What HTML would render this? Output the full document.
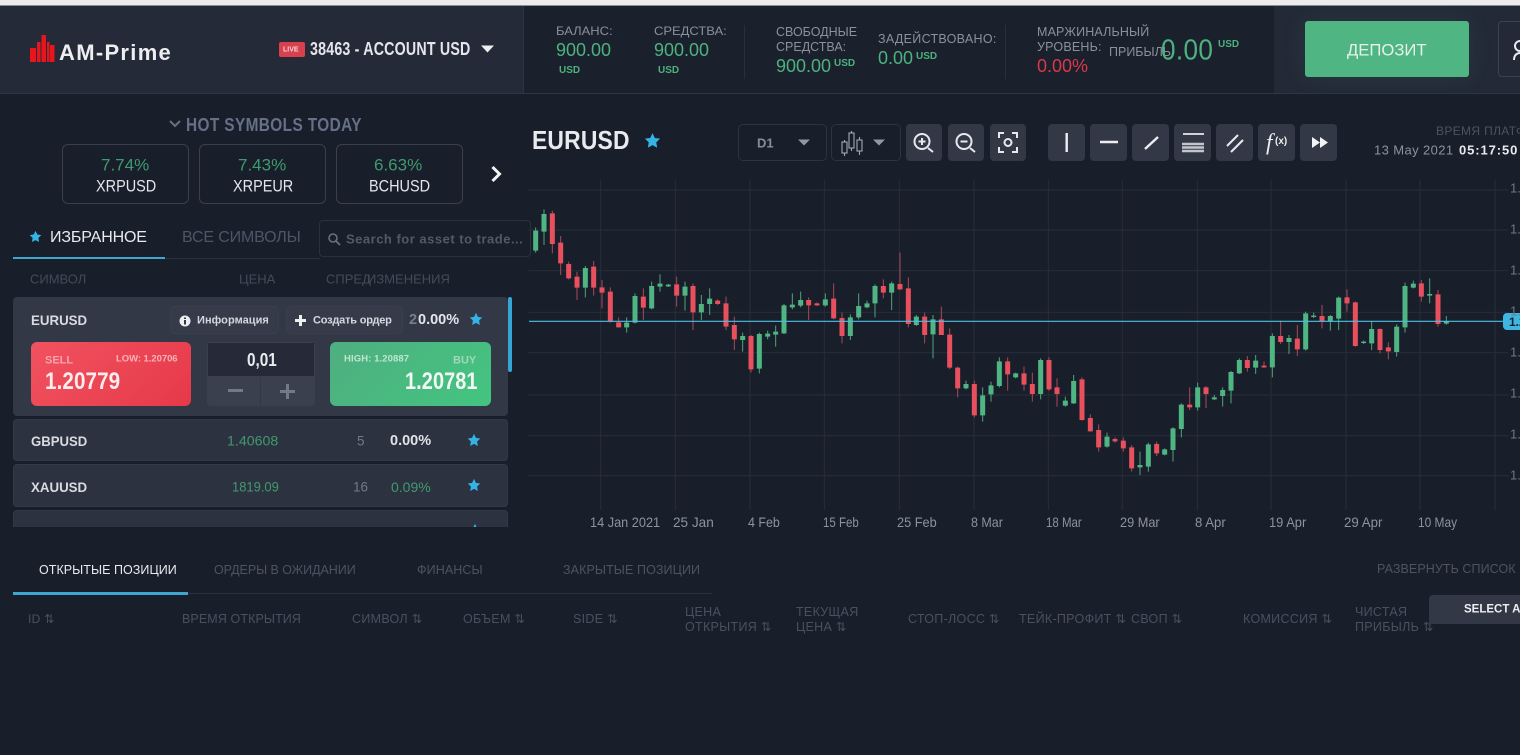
<!DOCTYPE html>
<html lang="ru"><head><meta charset="utf-8"><title>AM-Prime</title>
<style>
*{box-sizing:border-box}
html,body{margin:0;padding:0;width:1520px;height:755px;overflow:hidden;background:#191e2b;font-family:"Liberation Sans",sans-serif}
#p{position:relative;width:1520px;height:755px;overflow:hidden;background:#191e2b;filter:blur(.35px)}
.b{position:absolute}
.t{position:absolute;white-space:nowrap;transform:translateY(-50%) scaleX(var(--x,1));transform-origin:left center;line-height:1;font-family:"Liberation Sans",sans-serif}
.w{font-family:"Liberation Sans",sans-serif}
.g{color:#49a877}
.d{color:#4a5060}
.bd{letter-spacing:.3px}
.m{color:#8b909d}
.tb{position:absolute;top:124px;height:37px;background:#333846;border-radius:4px}
.tb svg{position:absolute;left:0;top:0}
.hb{position:absolute;top:144px;height:60px;width:127px;border:1px solid #3a3f4b;border-radius:6px}
.row{position:absolute;left:13px;width:495px;background:#2d3240;border-radius:4px;border:1px solid #343947}
</style></head><body><div id="p">
<svg width="0" height="0" style="position:absolute"><defs><symbol id="s" viewBox="0 0 24 24"><path d="M12 1.500l3.300 6.900 7.400 1-5.400 5.200 1.300 7.600L12 18.600l-6.600 3.600 1.300-7.600L1.300 9.400l7.400-1z" fill="#34b3e4"/></symbol></defs></svg>

<div class="b" style="left:0;top:0;width:1520px;height:5px;background:#ececec"></div>
<div class="b" style="left:0;top:5px;width:1520px;height:1px;background:#8b8d92"></div>
<div class="b" style="left:0;top:6px;width:523px;height:87px;background:#242a38"></div>
<div class="b" style="left:523px;top:6px;width:751px;height:87px;background:#1b202d;border-left:1px solid #2c3240"></div>
<div class="b" style="left:1274px;top:6px;width:246px;height:87px;background:#232937"></div>
<div class="b" style="left:0;top:93px;width:1520px;height:1px;background:#2f3542"></div>

<!-- logo -->
<svg class="b" style="left:30px;top:34px" width="25" height="28" viewBox="0 0 25 28"><path d="M0 14h6v14H0zM7 8h3.500v20H7zM11.500 1h4.500v27h-4.500zM17 8h2.500v20H17zM20 11h4.500v17H20z" fill="#e8161c"/></svg>
<span class="t w" style="left:59px;top:53px;font-size:22px;font-weight:700;letter-spacing:1.3px;color:#eceef0">AM-Prime</span>

<div class="b" style="left:279px;top:42px;width:26px;height:15px;background:#d9404e;border-radius:2px"></div>
<span class="t w" style="left:283px;top:50px;font-size:7px;font-weight:700;color:#f4d5d8">LIVE</span>
<span class="t" style="left:310px;top:49px;font-size:18px;font-weight:700;color:#e4e6ea;letter-spacing:.25px;--x:.79">38463 - ACCOUNT USD</span>
<svg class="b" style="left:481px;top:45px" width="13" height="8"><path d="M0 .5h13L6.500 7.500z" fill="#eceef0"/></svg>

<!-- stats -->
<span class="t m" style="left:556px;top:31px;font-size:12px;--x:1.08">БАЛАНС:</span>
<span class="t g" style="left:556px;top:50px;font-size:18px;color:#4cb27e">900.00</span>
<span class="t g" style="left:559px;top:71px;font-size:10px;font-weight:700;color:#4cb27e">USD</span>
<span class="t m" style="left:654px;top:31px;font-size:12px;--x:1.08">СРЕДСТВА:</span>
<span class="t g" style="left:654px;top:50px;font-size:18px;color:#4cb27e">900.00</span>
<span class="t g" style="left:658px;top:71px;font-size:10px;font-weight:700;color:#4cb27e">USD</span>
<div class="b" style="left:744px;top:25px;width:1px;height:54px;background:#2a2f3c"></div>
<span class="t m" style="left:776px;top:32px;font-size:12.500px">СВОБОДНЫЕ</span>
<span class="t m" style="left:776px;top:47px;font-size:12.500px">СРЕДСТВА:</span>
<span class="t g" style="left:776px;top:66px;font-size:18px;color:#4cb27e">900.00</span>
<span class="t g" style="left:834px;top:64px;font-size:10px;font-weight:700;color:#4cb27e">USD</span>
<span class="t m" style="left:878px;top:39px;font-size:12.500px;letter-spacing:.3px">ЗАДЕЙСТВОВАНО:</span>
<span class="t g" style="left:878px;top:58px;font-size:18px;color:#4cb27e">0.00</span>
<span class="t g" style="left:916px;top:57px;font-size:10px;font-weight:700;color:#4cb27e">USD</span>
<div class="b" style="left:1005px;top:25px;width:1px;height:54px;background:#2a2f3c"></div>
<span class="t m" style="left:1037px;top:32px;font-size:12.500px;letter-spacing:.15px">МАРЖИНАЛЬНЫЙ</span>
<span class="t m" style="left:1037px;top:47px;font-size:12.500px;letter-spacing:.2px">УРОВЕНЬ:</span>
<span class="t" style="left:1037px;top:66px;font-size:18px;color:#d8394a">0.00%</span>
<span class="t m" style="left:1109px;top:52px;font-size:12.500px">ПРИБЫЛЬ</span>
<span class="t g" style="left:1161px;top:51px;font-size:29px;color:#4cb27e;letter-spacing:.4px;--x:.9">0.00</span>
<span class="t g" style="left:1218px;top:45px;font-size:10px;font-weight:700;color:#4cb27e">USD</span>

<div class="b" style="left:1305px;top:21px;width:164px;height:56px;background:#4fb583;border-radius:3px;box-shadow:0 0 24px rgba(79,181,131,.12)"></div>
<span class="t" style="left:1347px;top:50px;font-size:17px;color:#e6f3ec;--x:.98">ДЕПОЗИТ</span>
<div class="b" style="left:1498px;top:21px;width:40px;height:56px;border:1px solid #3c4250;border-radius:4px"></div>
<svg class="b" style="left:1512px;top:38px" width="8" height="24"><circle cx="8" cy="8" r="5" fill="none" stroke="#e8eaee" stroke-width="2"/><path d="M2 22c0-5 3-7 6-7" fill="none" stroke="#e8eaee" stroke-width="2"/></svg>

<!-- hot -->
<svg class="b" style="left:169px;top:120px" width="12" height="8"><path d="M1 1l5 5 5-5" fill="none" stroke="#687084" stroke-width="2"/></svg>
<span class="t" style="left:186px;top:125px;font-size:18px;font-weight:700;color:#667086;letter-spacing:.45px;--x:.855">HOT SYMBOLS TODAY</span>
<div class="hb" style="left:62px"></div><div class="hb" style="left:199px"></div><div class="hb" style="left:336px"></div>
<span class="t g" style="left:101px;top:165px;font-size:17px;color:#3f9a6e">7.74%</span>
<span class="t" style="left:96px;top:186px;font-size:17px;color:#e4e6ea;--x:.85">XRPUSD</span>
<span class="t g" style="left:238px;top:165px;font-size:17px;color:#3f9a6e">7.43%</span>
<span class="t" style="left:233px;top:186px;font-size:17px;color:#e4e6ea;--x:.85">XRPEUR</span>
<span class="t g" style="left:374px;top:165px;font-size:17px;color:#3f9a6e">6.63%</span>
<span class="t" style="left:369px;top:186px;font-size:17px;color:#e4e6ea;--x:.85">BCHUSD</span>
<svg class="b" style="left:490px;top:165px" width="13" height="18"><path d="M2.500 2l7 7-7 7" fill="none" stroke="#f2f3f5" stroke-width="3"/></svg>

<!-- tabs -->
<svg class="b" style="left:29px;top:230px" width="13" height="13"><use href="#s"/></svg>
<span class="t w" style="left:50px;top:238px;font-size:16px;color:#e8eaee;letter-spacing:-.15px">ИЗБРАННОЕ</span>
<span class="t w" style="left:182px;top:238px;font-size:16px;color:#4e5566;letter-spacing:-.15px">ВСЕ СИМВОЛЫ</span>
<div class="b" style="left:13px;top:258px;width:307px;height:1px;background:#2b303d"></div>
<div class="b" style="left:13px;top:257px;width:152px;height:2px;background:#3fa7cf"></div>
<div class="b" style="left:319px;top:220px;width:212px;height:37px;border:1px solid #2c313e;border-radius:4px"></div>
<svg class="b" style="left:327px;top:232px" width="14" height="14"><circle cx="6" cy="6" r="4" fill="none" stroke="#6a7080" stroke-width="1.600"/><path d="M9 9l4 4" stroke="#6a7080" stroke-width="1.800"/></svg>
<span class="t w" style="left:346px;top:239px;font-size:13px;font-weight:700;color:#535969;letter-spacing:.5px">Search for asset to trade...</span>

<span class="t w d" style="left:30px;top:279px;font-size:13px;color:#444a59">СИМВОЛ</span>
<span class="t w d" style="left:239px;top:279px;font-size:13px;color:#444a59">ЦЕНА</span>
<span class="t w d" style="left:326px;top:279px;font-size:13px;color:#444a59">СПРЕД</span>
<span class="t w d" style="left:367px;top:279px;font-size:13px;color:#444a59">ИЗМЕНЕНИЯ</span>

<!-- active row -->
<div class="row" style="top:297px;height:119px;background:#333846;border:0"></div>
<div class="b" style="left:508px;top:297px;width:4px;height:75px;background:#35a6d4;border-radius:2px"></div>
<span class="t w" style="left:31px;top:320px;font-size:14px;font-weight:700;color:#d9dbe0;--x:.95">EURUSD</span>
<div class="b" style="left:170px;top:306px;width:109px;height:28px;background:#363b49;border:1px solid #3a3f4d;border-radius:4px"></div>
<div class="b" style="left:286px;top:306px;width:117px;height:28px;background:#363b49;border:1px solid #3a3f4d;border-radius:4px"></div>
<svg class="b" style="left:179px;top:315px" width="12" height="12"><circle cx="6" cy="6" r="5.500" fill="#eceef0"/><path d="M5 5h2v4.500H5zM5 2.500h2v1.500H5z" fill="#333846"/></svg>
<span class="t w" style="left:197px;top:321px;font-size:11px;color:#d5d8de;font-weight:700;letter-spacing:.05px">Информация</span>
<svg class="b" style="left:295px;top:315px" width="11" height="11"><path d="M4 0h3v4h4v3H7v4H4V7H0V4h4z" fill="#eceef0"/></svg>
<span class="t w" style="left:313px;top:321px;font-size:11px;color:#d5d8de;font-weight:700;letter-spacing:-.2px">Создать ордер</span>
<span class="t w" style="left:409px;top:320px;font-size:14.500px;font-weight:700;color:#7a7f8c">2</span>
<span class="t w" style="left:418px;top:320px;font-size:14.500px;font-weight:700;color:#e4e6ea">0.00%</span>
<svg class="b" style="left:469px;top:312px" width="14" height="14"><use href="#s"/></svg>

<div class="b" style="left:31px;top:342px;width:160px;height:64px;border-radius:6px;background:linear-gradient(135deg,#f1525f,#e6394a)"></div>
<span class="t w" style="left:45px;top:361px;font-size:11px;font-weight:700;color:#f4a4ab">SELL</span>
<span class="t w" style="left:116px;top:359px;font-size:9.500px;font-weight:700;color:#f4b3b8;letter-spacing:-.05px">LOW: 1.20706</span>
<span class="t" style="left:45px;top:382px;font-size:24px;font-weight:700;color:#fbeced;letter-spacing:.1px;--x:.86">1.20779</span>
<div class="b" style="left:207px;top:342px;width:108px;height:64px;background:#3b404e;border-radius:4px"></div>
<div class="b" style="left:208px;top:343px;width:106px;height:33px;background:#262a38"></div>
<div class="b" style="left:260px;top:377px;width:1px;height:28px;background:#333846"></div>
<span class="t" style="left:247px;top:360px;font-size:18px;font-weight:700;color:#e8eaee;--x:.85">0,01</span>
<div class="b" style="left:228px;top:389px;width:15px;height:3px;background:#747986"></div>
<svg class="b" style="left:280px;top:384px" width="15" height="15"><path d="M6 0h3v6h6v3H9v6H6V9H0V6h6z" fill="#747986"/></svg>
<div class="b" style="left:330px;top:342px;width:161px;height:64px;border-radius:6px;background:linear-gradient(135deg,#4fae80,#43c580)"></div>
<span class="t w" style="left:344px;top:359px;font-size:9.500px;font-weight:700;color:#bfe6d0;letter-spacing:.1px">HIGH: 1.20887</span>
<span class="t w" style="left:453px;top:361px;font-size:11px;font-weight:700;color:#9fd8bb">BUY</span>
<span class="t" style="left:405px;top:382px;font-size:24px;font-weight:700;color:#f2f9f5;letter-spacing:.1px;--x:.83">1.20781</span>

<!-- rows -->
<div class="row" style="top:419px;height:42px"></div>
<span class="t w" style="left:31px;top:441px;font-size:14px;font-weight:700;color:#d9dbe0;--x:.94">GBPUSD</span>
<span class="t w" style="left:227px;top:441px;font-size:13.500px;color:#3f9a6e;--x:1.05">1.40608</span>
<span class="t w" style="left:357px;top:441px;font-size:13.500px;color:#747986">5</span>
<span class="t w" style="left:390px;top:441px;font-size:14.500px;font-weight:700;color:#e0e2e7">0.00%</span>
<svg class="b" style="left:467px;top:433px" width="14" height="14"><use href="#s"/></svg>
<div class="row" style="top:464px;height:43px"></div>
<span class="t w" style="left:31px;top:487px;font-size:14px;font-weight:700;color:#d9dbe0;--x:.95">XAUUSD</span>
<span class="t w" style="left:232px;top:487px;font-size:13.500px;color:#3f9a6e;--x:.96">1819.09</span>
<span class="t w" style="left:353px;top:487px;font-size:13.500px;color:#747986">16</span>
<span class="t w" style="left:391px;top:487px;font-size:14px;color:#3f9a6e">0.09%</span>
<svg class="b" style="left:467px;top:478px" width="14" height="14"><use href="#s"/></svg>
<div class="row" style="top:510px;height:40px"></div>
<svg class="b" style="left:468px;top:523px" width="14" height="14"><use href="#s"/></svg>
<div class="b" style="left:0;top:527px;width:529px;height:28px;background:#191e2b"></div>

<!-- chart header -->
<span class="t" style="left:532px;top:140px;font-size:26px;font-weight:700;color:#e8eaee;letter-spacing:.2px;--x:.88">EURUSD</span>
<svg class="b" style="left:644px;top:132px" width="17" height="17"><use href="#s"/></svg>
<div class="b" style="left:738px;top:124px;width:89px;height:37px;border:1px solid #2e3340;border-radius:5px"></div>
<span class="t w" style="left:757px;top:143px;font-size:13px;font-weight:700;color:#868c9c">D1</span>
<svg class="b" style="left:798px;top:139px" width="13" height="8"><path d="M0 .5h12L6 6.500z" fill="#9297a5"/></svg>
<div class="b" style="left:831px;top:124px;width:70px;height:37px;border:1px solid #2e3340;border-radius:5px"></div>
<svg class="b" style="left:840px;top:131px" width="24" height="26" fill="none" stroke="#a3a8b5" stroke-width="1.100"><path d="M4.500 9v16M11.500 0v20M19.500 6v18"/><rect x="2" y="11" width="5" height="11" fill="#191e2b"/><rect x="9" y="2" width="5" height="15" fill="#191e2b"/><rect x="17" y="9" width="5" height="11" fill="#191e2b"/></svg>
<svg class="b" style="left:873px;top:139px" width="13" height="8"><path d="M0 .5h12L6 6.500z" fill="#9297a5"/></svg>

<div class="tb" style="left:906px;width:36px"><svg width="36" height="37" fill="none" stroke="#e6e8ec" stroke-width="2"><circle cx="16" cy="17.500" r="7.500"/><path d="M12.500 17.500h7M16 14v7M22 24l5 4"/></svg></div>
<div class="tb" style="left:948px;width:36px"><svg width="36" height="37" fill="none" stroke="#e6e8ec" stroke-width="2"><circle cx="16" cy="17.500" r="7.500"/><path d="M12.500 17.500h7M22 24l5 4"/></svg></div>
<div class="tb" style="left:990px;width:36px"><svg width="36" height="37" fill="none" stroke="#e6e8ec" stroke-width="2"><path d="M9 14v-5h5M22 9h5v5M27 23v5h-5M14 28H9v-5"/><circle cx="18" cy="18.500" r="3.500"/></svg></div>
<div class="tb" style="left:1048px;width:37px"><svg width="37" height="37"><path d="M18.700 9v19" stroke="#eceef0" stroke-width="2.400"/></svg></div>
<div class="tb" style="left:1090px;width:37px"><svg width="37" height="37"><path d="M10 18h18" stroke="#eceef0" stroke-width="2.400"/></svg></div>
<div class="tb" style="left:1132px;width:37px"><svg width="37" height="37"><path d="M13 25L26 13" stroke="#eceef0" stroke-width="2.400"/></svg></div>
<div class="tb" style="left:1174px;width:37px"><svg width="37" height="37" fill="none" stroke="#e6e8ec"><path d="M9 10h21" stroke-width="1.800"/><path d="M8 20h22M8 23.500h22M8 27h22" stroke-width="2.400" opacity=".8"/></svg></div>
<div class="tb" style="left:1216px;width:37px"><svg width="37" height="37" fill="none" stroke="#e6e8ec" stroke-width="2.100"><path d="M11 22l11-11M15 28l12-12"/></svg></div>
<div class="tb" style="left:1258px;width:37px"><span class="t" style="left:8px;top:18px;font-family:'Liberation Serif',serif;font-style:italic;font-size:23px;color:#eceef0">f</span><span class="t w" style="left:17px;top:18px;font-size:10px;font-weight:700;color:#eceef0">(x)</span></div>
<div class="tb" style="left:1300px;width:37px"><svg width="37" height="37"><path d="M12 13l8 5.500-8 5.500zM20 13l8 5.500-8 5.500z" fill="#f2f3f5"/></svg></div>

<span class="t" style="left:1436px;top:131px;font-size:12px;color:#4d5362;letter-spacing:.35px">ВРЕМЯ ПЛАТФОРМЫ</span>
<span class="t w" style="left:1374px;top:150px;font-size:13px;color:#8d92a0;letter-spacing:.4px">13 May 2021</span>
<span class="t w" style="left:1459px;top:150px;font-size:13px;font-weight:700;color:#e8eaee;letter-spacing:.9px">05:17:50</span>

<!-- chart -->
<svg class="b" style="left:525px;top:180px" width="1000" height="360" viewBox="0 0 3000 1080" fill="none">
<path d="M10 30H2950M10 150H2950M10 272H2950M10 397H2950M10 518H2950M10 645H2950M10 767H2950M10 887H2950" stroke="#282d39" stroke-width="3"/>
<path d="M227 0V990M451 0V990M675 0V990M898 0V990M1123 0V990M1347 0V990M1570 0V990M1792 0V990M2017 0V990M2238 0V990M2463 0V990M2685 0V990M2910 0V990" stroke="#282d39" stroke-width="3"/>
<g>
<path stroke="#4da57a" stroke-width="3" d="M32 142V218M57 88V195M181 258V352M305 412V458M330 340V430M380 305V388M405 283V335M430 312V321M480 305V392M529 345V420M554 325V405M653 458V515M703 458V580M728 452V478M752 437V500M777 372V462M802 340V388M827 335V382M901 340V380M976 403V480M1001 340V418M1026 362V385M1050 313V412M1100 305V390M1174 405V438M1224 405V535M1323 602V628M1373 622V725M1398 605V665M1423 532V622M1472 578V595"/>
<path stroke="#4fb583" stroke-width="15" d="M32 152V212M57 102V155M181 264V323M305 428V442M330 348V428M380 318V385M405 311V320M430 314V319M480 320V347M529 372V397M554 356V372M653 468V480M703 462V566M728 461V470M752 455V464M777 376V460M802 374V382M827 360V377M901 358V376M976 412V468M1001 378V412M1026 370V382M1050 318V370M1100 310V338M1174 410V435M1224 418V463M1323 612V625M1373 646V706M1398 616V643M1423 544V618M1472 580V592"/>
<path stroke="#a84a56" stroke-width="3" d="M82 92V220M107 168V285M131 245V298M156 275V360M206 243V347M231 300V385M256 322V428M281 412V443M355 325V420M455 290V380M504 310V450M578 358V375M603 350V450M628 410V510M678 465V578M851 352V420M876 367V378M926 310V418M951 398V490M1075 298V355M1125 218V330M1150 292V442M1199 398V490M1249 380V465M1274 445V567M1298 560V652M1348 602V712M1448 532V632"/>
<path stroke="#e8505e" stroke-width="15" d="M82 100V192M107 188V250M131 252V295M156 290V323M206 260V323M231 322V338M256 335V425M281 427V442M355 350V383M455 313V347M504 318V397M578 362V372M603 370V440M628 435V478M678 468V568M851 360V376M876 370V376M926 356V415M951 414V468M1075 318V338M1125 312V328M1150 325V432M1199 410V465M1249 418V465M1274 464V563M1298 563V625M1348 612V706M1448 544V583"/>
</g>
<g transform="translate(1485 0)">
<path stroke="#4da57a" stroke-width="3" d="M62 535V658M136 650V680M161 585V672M261 758V803M360 815V885M385 788V875M434 805V826M459 742V845M484 670V772M533 608V692M583 645V660M608 622V680M633 573V670M658 535V582M707 525V582M757 460V592M807 465V522M857 395V512M881 398V414M931 405V452M956 350V450M1031 482V492M1055 425V510M1130 433V530M1155 308V458M1180 302V325M1229 295V370M1279 408V434"/>
<path stroke="#4fb583" stroke-width="15" d="M62 540V642M136 662V677M161 603V670M261 770V800M360 855V862M385 793V860M434 808V824M459 745V810M484 674V747M533 622V682M583 652V658M608 630V648M633 576V632M658 540V580M707 542V563M757 468V562M807 474V486M857 400V508M881 407V411M931 408V425M956 353V416M1031 485V489M1055 447V490M1130 440V516M1155 318V442M1180 311V323M1229 342V347M1279 424V431"/>
<path stroke="#a84a56" stroke-width="3" d="M12 560V632M37 578V665M87 532V632M111 595V680M186 592V722M211 703V755M236 733V815M285 772V788M310 772V815M335 795V875M410 785V828M509 622V690M558 618V684M682 528V575M732 545V564M782 422V492M832 435V528M906 375V445M981 328V395M1006 365V500M1080 445V520M1105 487V538M1204 300V365M1254 330V440"/>
<path stroke="#e8505e" stroke-width="15" d="M12 580V614M37 612V642M87 540V628M111 622V642M186 598V720M211 714V754M236 750V802M285 777V784M310 782V805M335 802V865M410 792V820M509 674V682M558 622V642M682 540V564M732 557V562M782 468V486M832 476V508M906 408V425M981 352V370M1006 367V498M1080 447V510M1105 502V514M1204 310V350M1254 343V432"/>
</g>
<path d="M12 424H2950" stroke="#4cc0e6" stroke-width="3.500"/>
</svg>
<div class="b" style="left:1503px;top:313px;width:30px;height:17px;background:#3fb6e2;border-radius:4px"></div>
<span class="t w" style="left:1509px;top:322px;font-size:12px;font-weight:700;color:#16202c">1.20</span>
<span class="t w" style="left:1510px;top:188px;font-size:13px;color:#6f7583">1.22</span>
<span class="t w" style="left:1510px;top:229px;font-size:13px;color:#6f7583">1.22</span>
<span class="t w" style="left:1510px;top:270px;font-size:13px;color:#6f7583">1.21</span>
<span class="t w" style="left:1510px;top:311px;font-size:13px;color:#6f7583">1.21</span>
<span class="t w" style="left:1510px;top:352px;font-size:13px;color:#6f7583">1.20</span>
<span class="t w" style="left:1510px;top:393px;font-size:13px;color:#6f7583">1.19</span>
<span class="t w" style="left:1510px;top:434px;font-size:13px;color:#6f7583">1.19</span>
<span class="t w" style="left:1510px;top:475px;font-size:13px;color:#6f7583">1.18</span>

<span class="t" style="left:590px;top:522px;font-size:14px;color:#8d92a0;--x:.91">14 Jan 2021</span>
<span class="t" style="left:673px;top:522px;font-size:14px;color:#8d92a0;--x:.97">25 Jan</span>
<span class="t" style="left:748px;top:522px;font-size:14px;color:#8d92a0;--x:.89">4 Feb</span>
<span class="t" style="left:823px;top:522px;font-size:14px;color:#8d92a0;--x:.82">15 Feb</span>
<span class="t" style="left:897px;top:522px;font-size:14px;color:#8d92a0;--x:.91">25 Feb</span>
<span class="t" style="left:971px;top:522px;font-size:14px;color:#8d92a0;--x:.89">8 Mar</span>
<span class="t" style="left:1046px;top:522px;font-size:14px;color:#8d92a0;--x:.82">18 Mar</span>
<span class="t" style="left:1120px;top:522px;font-size:14px;color:#8d92a0;--x:.91">29 Mar</span>
<span class="t" style="left:1195px;top:522px;font-size:14px;color:#8d92a0;--x:.94">8 Apr</span>
<span class="t" style="left:1269px;top:522px;font-size:14px;color:#8d92a0;--x:.92">19 Apr</span>
<span class="t" style="left:1344px;top:522px;font-size:14px;color:#8d92a0;--x:.95">29 Apr</span>
<span class="t" style="left:1418px;top:522px;font-size:14px;color:#8d92a0;--x:.85">10 May</span>

<!-- bottom -->
<span class="t w" style="left:39px;top:570px;font-size:12.500px;color:#e8eaee;letter-spacing:.05px">ОТКРЫТЫЕ ПОЗИЦИИ</span>
<span class="t w" style="left:214px;top:570px;font-size:12.500px;color:#4d5362;letter-spacing:-.05px">ОРДЕРЫ В ОЖИДАНИИ</span>
<span class="t w" style="left:417px;top:570px;font-size:12.500px;color:#4d5362;letter-spacing:.1px">ФИНАНСЫ</span>
<span class="t w" style="left:563px;top:570px;font-size:12.500px;color:#4d5362;letter-spacing:.1px">ЗАКРЫТЫЕ ПОЗИЦИИ</span>
<div class="b" style="left:13px;top:593px;width:699px;height:1px;background:#2b303d"></div>
<div class="b" style="left:13px;top:592px;width:175px;height:3px;background:#3fa7cf"></div>
<span class="t w" style="left:1377px;top:569px;font-size:12.500px;color:#4d5362;letter-spacing:.08px">РАЗВЕРНУТЬ СПИСОК</span>
<div class="b" style="left:1429px;top:595px;width:100px;height:29px;background:#333846;border-radius:4px 0 0 4px"></div>
<span class="t w" style="left:1464px;top:610px;font-size:11.500px;font-weight:700;color:#eceef0">SELECT ALL</span>

<span class="t w d bd" style="left:28px;top:619px;font-size:12px">ID ⇅</span>
<span class="t w d" style="left:182px;top:619px;font-size:12.500px;letter-spacing:.1px">ВРЕМЯ ОТКРЫТИЯ</span>
<span class="t w d bd" style="left:352px;top:619px;font-size:12.500px">СИМВОЛ ⇅</span>
<span class="t w d bd" style="left:463px;top:619px;font-size:12.500px">ОБЪЕМ ⇅</span>
<span class="t w d bd" style="left:573px;top:619px;font-size:12.500px">SIDE ⇅</span>
<span class="t w d bd" style="left:685px;top:612px;font-size:12.500px">ЦЕНА</span>
<span class="t w d bd" style="left:685px;top:627px;font-size:12.500px">ОТКРЫТИЯ ⇅</span>
<span class="t w d bd" style="left:796px;top:612px;font-size:12.500px">ТЕКУЩАЯ</span>
<span class="t w d bd" style="left:796px;top:627px;font-size:12.500px">ЦЕНА ⇅</span>
<span class="t w d bd" style="left:908px;top:619px;font-size:12.500px">СТОП-ЛОСС ⇅</span>
<span class="t w d bd" style="left:1019px;top:619px;font-size:12.500px">ТЕЙК-ПРОФИТ ⇅</span>
<span class="t w d bd" style="left:1131px;top:619px;font-size:12.500px">СВОП ⇅</span>
<span class="t w d bd" style="left:1243px;top:619px;font-size:12.500px">КОМИССИЯ ⇅</span>
<span class="t w d bd" style="left:1355px;top:612px;font-size:12.500px">ЧИСТАЯ</span>
<span class="t w d bd" style="left:1355px;top:627px;font-size:12.500px">ПРИБЫЛЬ ⇅</span>
</div></body></html>
